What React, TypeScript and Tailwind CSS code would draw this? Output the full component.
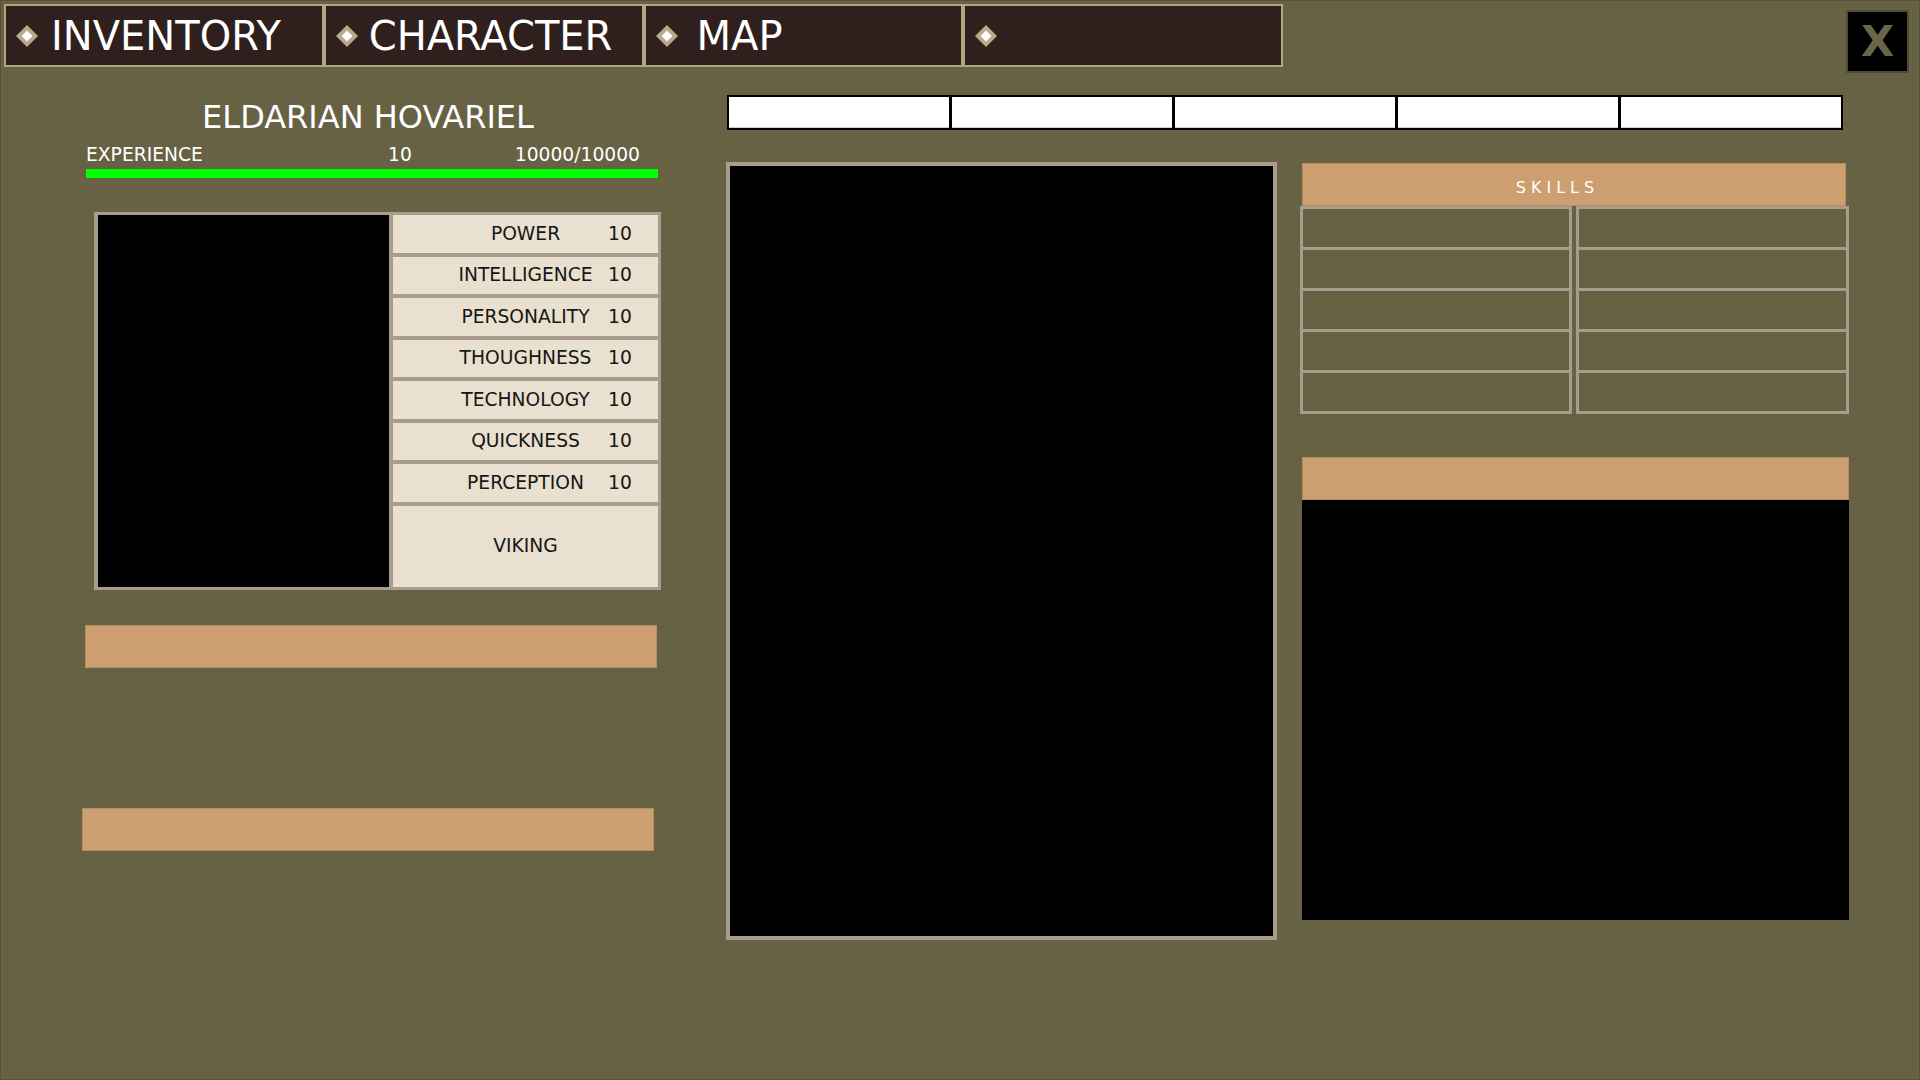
import React from "react";

const tabs = [
  { label: "INVENTORY", offset: "ml-[13px]" },
  { label: "CHARACTER", offset: "ml-[11px]" },
  { label: "MAP", offset: "ml-[19px]" },
  { label: "", offset: "" },
];

const stats = [
  { name: "POWER", value: 10 },
  { name: "INTELLIGENCE", value: 10 },
  { name: "PERSONALITY", value: 10 },
  { name: "THOUGHNESS", value: 10 },
  { name: "TECHNOLOGY", value: 10 },
  { name: "QUICKNESS", value: 10 },
  { name: "PERCEPTION", value: 10 },
];

function Diamond() {
  return (
    <svg width="22" height="22" viewBox="0 0 22 22" className="shrink-0">
      <polygon points="11,0 22,11 11,22 0,11" fill="#b9ab8a" />
      <polygon points="11,5.5 16.5,11 11,16.5 5.5,11" fill="#ffffff" />
    </svg>
  );
}

function SkillColumn({ className }: { className: string }) {
  return (
    <div className={`flex flex-col gap-[3px] border-[3px] border-[#a99b8e] bg-[#a99b8e] ${className}`}>
      {[0, 1, 2, 3, 4].map((i) => (
        <div key={i} className="h-[38px] bg-[#676244]" />
      ))}
    </div>
  );
}

export default function App() {
  return (
    <div className="w-[1920px] h-[1080px] overflow-hidden bg-[#676244] border border-[#57533b] p-[3px] font-['DejaVu_Sans',sans-serif]">
      {/* Top bar */}
      <div className="flex items-start justify-between">
        <div className="flex w-[1279px] h-[63px]">
          {tabs.map((t, i) => (
            <div
              key={i}
              className="flex-1 flex items-center border-2 border-[#b3a57f] bg-[#2f1f1d] pl-[10px]"
            >
              <Diamond />
              {t.label && (
                <span className={`${t.offset} text-white text-[40px] leading-none`}>
                  {t.label}
                </span>
              )}
            </div>
          ))}
        </div>
        <div className="mt-[6px] mr-[7px] w-[63px] h-[63px] border-2 border-[#4f4b34] bg-black flex items-center justify-center">
          <span className="text-[43px] font-bold leading-none text-[#6b6548]">X</span>
        </div>
      </div>

      {/* Body */}
      <div className="flex items-start">
        {/* Left column */}
        <div className="ml-[78px] w-[580px] mt-[26px] flex flex-col">
          <div className="ml-[4px] w-[564px] h-[36px] leading-[36px] text-[32px] text-white text-center">
            ELDARIAN HOVARIEL
          </div>
          <div className="mt-[9px] ml-[4px] w-[572px] h-[22px] leading-[22px] text-[18.7px] text-white flex">
            <span className="w-[302px]">EXPERIENCE</span>
            <span>10</span>
            <span className="ml-auto pr-[18px]">10000/10000</span>
          </div>
          <div className="mt-[3px] ml-[4px] w-[572px] h-[9px] bg-[#00ff00]" />

          <div className="mt-[34px] ml-[12px] w-[567px] h-[378px] bg-[#a99b8e] flex pt-[3px] pb-[3px] pl-[4px] pr-[3px] gap-[4px]">
            <div className="w-[291px] bg-black" />
            <div className="flex-1 flex flex-col gap-[4px]">
              {stats.map((s) => (
                <div
                  key={s.name}
                  className="h-[37.5px] grid items-center bg-[#e9e0cf] text-[18.7px] text-[#161616]"
                >
                  <span className="col-start-1 row-start-1 text-center">{s.name}</span>
                  <span className="col-start-1 row-start-1 ml-[215px]">{s.value}</span>
                </div>
              ))}
              <div className="flex-1 flex items-center justify-center bg-[#e9e0cf] text-[18.7px] text-[#161616]">
                VIKING
              </div>
            </div>
          </div>

          <div className="mt-[35px] ml-[3px] w-[572px] h-[43px] bg-[#cd9f70] border border-[#b58d62]" />
          <div className="mt-[140px] w-[572px] h-[43px] bg-[#cd9f70] border border-[#b58d62]" />
        </div>

        {/* Right area */}
        <div className="ml-[64px] w-[1123px] mt-[22px] flex flex-col">
          <div className="ml-[1px] w-[1116px] h-[35px] flex gap-[3px] border-2 border-black bg-black">
            {[0, 1, 2, 3, 4].map((i) => (
              <div key={i} className="flex-1 bg-white border-b border-[#cfcfcf]" />
            ))}
          </div>

          <div className="mt-[32px] flex items-start">
            <div className="w-[551px] h-[778px] border-4 border-[#a99b8e] bg-black" />

            <div className="ml-[22px] w-[550px] flex flex-col">
              <div className="mt-[1px] mx-[3px] h-[43px] bg-[#cd9f70] border border-[#b58d62] flex items-center justify-center pt-[6px] pr-[33px]">
                <span className="text-[16px] tracking-[5px] text-white">SKILLS</span>
              </div>
              <div className="flex gap-[4px]">
                <SkillColumn className="ml-[1px] w-[272px]" />
                <SkillColumn className="w-[273px]" />
              </div>

              <div className="mt-[43px] ml-[3px] w-[547px] flex flex-col">
                <div className="h-[43px] bg-[#cd9f70] border border-[#b58d62]" />
                <div className="h-[420px] bg-black" />
              </div>
            </div>
          </div>
        </div>
      </div>
    </div>
  );
}
